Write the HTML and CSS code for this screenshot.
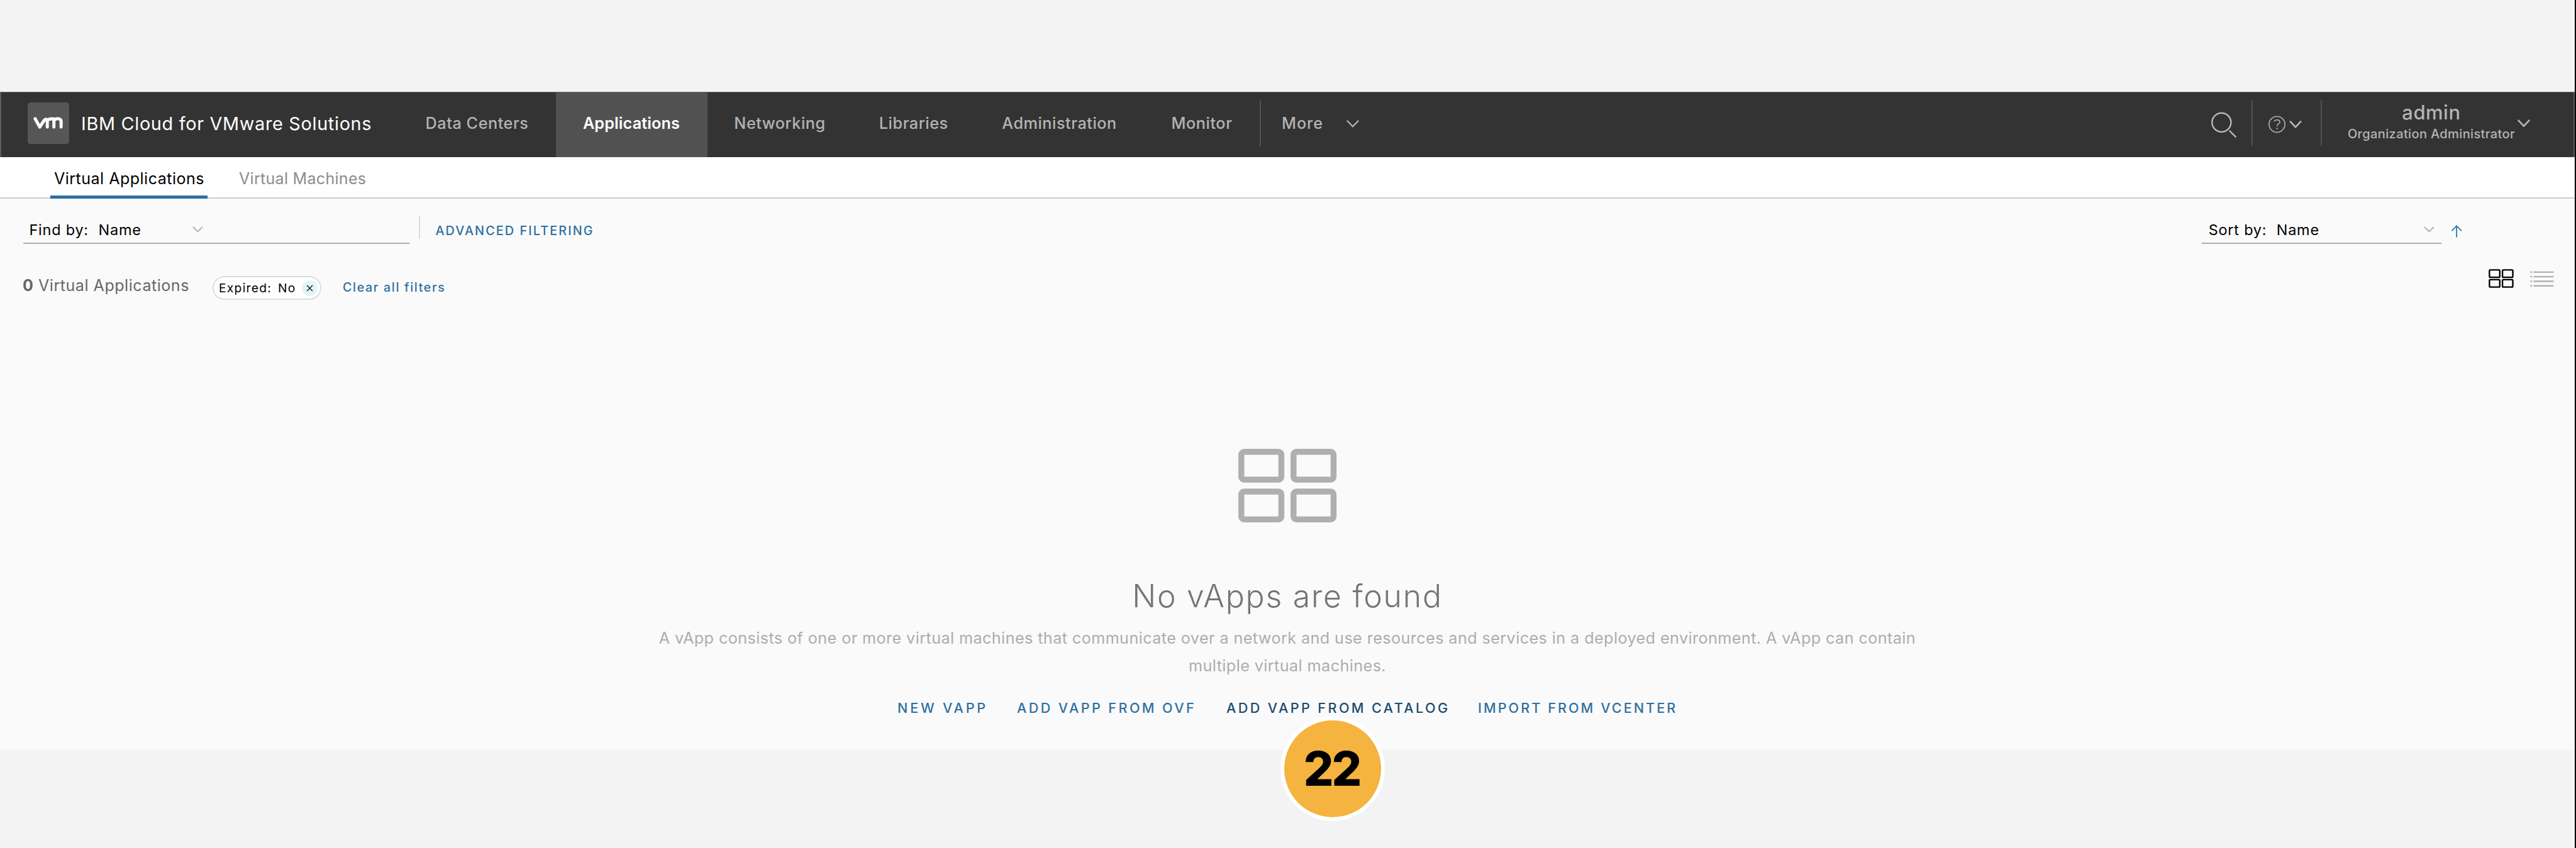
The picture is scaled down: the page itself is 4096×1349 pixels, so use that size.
FILE: index.html
```
<!DOCTYPE html>
<html lang="en">
<head>
<meta charset="utf-8">
<title>Virtual Applications</title>
<link rel="stylesheet" href="styles.css">
</head>
<body>
<div class="page">
  <header class="header">
    <svg class="logo" viewBox="0 0 72 72">
      <rect width="72" height="72" rx="5" fill="#565656"/>
      <path d="M13 28.300 L21 42.700 L29 30.500 Q31.500 28 34 30.500 V42.700 M34 31 Q37.500 27.500 45.500 28.500 V42.700 M45.500 31 C50 26.500 58 27.500 58 33 V42.700" fill="none" stroke="#fff" stroke-width="5.400" stroke-linecap="round" stroke-linejoin="round"/>
    </svg>
    <h1 class="brand">IBM Cloud for VMware Solutions</h1>
    <nav class="nav">
      <a>Data Centers</a>
      <a class="active">Applications</a>
      <a>Networking</a>
      <a>Libraries</a>
      <a>Administration</a>
      <a>Monitor</a>
    </nav>
    <div class="more">
      <span>More</span>
      <svg class="chevron-light" viewBox="0 0 24 15"><path d="M2 2 L12 12.500 L22 2"/></svg>
    </div>
    <div class="tools">
      <svg class="search" viewBox="0 0 46 46"><circle cx="19" cy="19.500" r="16.500"/><path d="M33.500 34.500 L43.500 44.500"/></svg>
      <i class="bar"></i>
      <svg class="help" viewBox="0 0 62 32">
        <circle cx="17" cy="16.200" r="13.800" stroke-width="1.800"/>
        <path d="M12.300 11.200 Q13.300 8.400 17 8.400 Q22 8.400 22 12.200 Q22 14.400 19.300 15.700 Q17.200 16.800 17.200 19.300" stroke-width="1.800"/>
        <circle cx="17.200" cy="23.300" r="1.300" class="dot"/>
        <path d="M39.500 10.500 L49.300 21 L59 10.500" stroke-width="3"/>
      </svg>
      <i class="bar"></i>
      <div class="user">
        <span class="user-name">admin</span>
        <span class="user-role">Organization Administrator</span>
      </div>
      <svg class="chevron-light user-chevron" viewBox="0 0 24 15"><path d="M2 2 L12 12.500 L22 2"/></svg>
    </div>
  </header>

  <nav class="tabs">
    <a class="tab current">Virtual Applications</a>
    <a class="tab">Virtual Machines</a>
  </nav>

  <main class="content">
    <section class="filters">
      <div class="select find">
        <span class="label">Find by:</span><span class="value">Name</span>
        <svg class="caret" viewBox="0 0 18 10"><path d="M1 1 L9 9 L17 1"/></svg>
      </div>
      <i class="rule"></i>
      <a class="advanced">ADVANCED FILTERING</a>
      <div class="select sort">
        <span class="label">Sort by:</span><span class="value">Name</span>
        <svg class="caret" viewBox="0 0 18 10"><path d="M1 1 L9 9 L17 1"/></svg>
      </div>
      <svg class="arrow" viewBox="0 0 20 22"><path d="M10 21.500 V1.500 M1.500 10.200 L10 1.500 L18.500 10.200"/></svg>
    </section>

    <section class="summary">
      <p class="count"><b>0</b> Virtual Applications</p>
      <div class="chip">
        <span class="chip-label">Expired:</span><span>No</span>
        <svg class="chip-close" viewBox="0 0 28 28"><circle cx="14" cy="14" r="14"/><path d="M9 9 L19 19 M19 9 L9 19"/></svg>
      </div>
      <a class="clear">Clear all filters</a>
      <div class="views">
        <svg class="view-grid" viewBox="0 0 44 33"><g fill="none" stroke="#000" stroke-width="2.600">
          <rect x="1.500" y="1.500" width="18" height="12.800" rx="1.500"/><rect x="24.200" y="1.500" width="18" height="12.800" rx="1.500"/>
          <rect x="1.500" y="18.500" width="18" height="12.800" rx="1.500"/><rect x="24.200" y="18.500" width="18" height="12.800" rx="1.500"/></g></svg>
        <svg class="view-list" viewBox="0 0 42 28">
          <g fill="#e0e0e0"><path d="M0 0h4v4H0z M0 8h4v4H0z M0 16h4v4H0z M0 24h4v4H0z"/></g>
          <g fill="#a6a6a6"><path d="M1 1h2v2H1z M1 9h2v2H1z M1 17h2v2H1z M1 25h2v2H1z"/></g>
          <path d="M7 2H40 M7 10H40 M7 18H40 M7 26H40" stroke="#b0b0b0" stroke-width="2.600" stroke-linecap="round"/>
        </svg>
      </div>
    </section>

    <section class="empty">
      <svg class="empty-icon" viewBox="0 0 171 128"><g fill="none" stroke="#afafaf" stroke-width="10.400">
        <rect x="5.200" y="5.200" width="69.600" height="48.400" rx="5"/><rect x="96" y="5.200" width="69.600" height="48.400" rx="5"/>
        <rect x="5.200" y="74.300" width="69.600" height="48.400" rx="5"/><rect x="96" y="74.300" width="69.600" height="48.400" rx="5"/></g></svg>
      <h2>No vApps are found</h2>
      <p>A vApp consists of one or more virtual machines that communicate over a network and use resources and services in a deployed environment. A vApp can contain multiple virtual machines.</p>
      <div class="actions">
        <a>NEW VAPP</a>
        <a>ADD VAPP FROM OVF</a>
        <a class="pressed">ADD VAPP FROM CATALOG</a>
        <a>IMPORT FROM VCENTER</a>
      </div>
    </section>
  </main>
  <div class="step">22</div>
</div>
</body>
</html>
```
FILE: styles.css
```
* { box-sizing: border-box; }

body {
  margin: 0;
  background: #f3f3f3;
  font-family: Inter, "Noto Sans", sans-serif;
  color: #000;
}

h1, h2, p { margin: 0; font-weight: 400; }
svg { display: block; flex: none; overflow: visible; }
a, span { white-space: nowrap; }

.page {
  position: relative;
  height: 1349px;
  padding-top: 146px;
  border-right: 2px solid #000;
  overflow: hidden;
}

/* Header */
.header {
  display: flex;
  align-items: center;
  height: 104px;
  padding-left: 42px;
  background: #333;
  border: 0 solid #5c5c5c;
  border-width: 1px 2px 0;
  border-top-color: #6b706c;
}

.logo { width: 66px; height: 66px; margin-bottom: 6px; }

.brand {
  width: 523.5px;
  padding: 0 0 5px 19px;
  font-size: 28.8px;
  letter-spacing: 0.7px;
  color: #fff;
  white-space: nowrap;
}

.nav {
  display: grid;
  grid-template-columns: 250px 241px 231px 194.500px 269px 184px;
  align-self: stretch;
  font-size: 25.2px;
  font-weight: 500;
  letter-spacing: 0.56px;
  color: #b3b3b3;
}

.nav a {
  display: flex;
  align-items: center;
  justify-content: center;
  padding-bottom: 5px;
}

.nav .active {
  background: #515151;
  color: #fff;
  font-weight: 600;
  letter-spacing: 0.15px;
}

.more {
  display: flex;
  align-items: center;
  height: 73px;
  margin-bottom: 5px;
  padding-left: 33px;
  border-left: 2px solid #515151;
  font-size: 25.2px;
  font-weight: 500;
  letter-spacing: 0.9px;
  color: #b3b3b3;
}

.chevron-light { width: 22px; height: 13.700px; fill: none; stroke: #b3b3b3; stroke-width: 3; }
.more .chevron-light { margin: 2px 0 0 36px; stroke-width: 2.500; }

.tools {
  display: flex;
  align-items: center;
  margin: 0 68px 6px auto;
}

.search { width: 42px; height: 42px; margin: 5px 23px 0 0; fill: none; stroke: #b9b9b9; stroke-width: 2.600; stroke-linecap: round; }
.bar { width: 2px; height: 73px; background: #515151; }
.help { width: 56.700px; height: 29.300px; margin: 4px 28px 0 23px; fill: none; stroke: #b3b3b3; }
.help .dot { fill: #b3b3b3; stroke: none; }

.user {
  display: flex;
  flex-direction: column;
  align-items: center;
  gap: 4px;
  margin: -3px 3px 0 41px;
  color: #b3b3b3;
  font-weight: 500;
}

.user-name { font-size: 31px; line-height: 34px; letter-spacing: 0.5px; }
.user-role { font-size: 20.1px; line-height: 26px; letter-spacing: 0.32px; }

/* Section tabs */
.tabs {
  display: flex;
  gap: 44px;
  height: 66px;
  padding-left: 80px;
  background: #fff;
  border-bottom: 2px solid #ccc;
}

.tab {
  height: 66px;
  padding: 0 6px;
  font-size: 25px;
  line-height: 68px;
  letter-spacing: 0.3px;
  color: #8c8c8c;
}

.current {
  width: 250px;
  letter-spacing: 0.5px;
  color: #000;
  border-bottom: 5px solid #2d70a1;
}

/* Content */
.content { height: 876.5px; padding-top: 28px; background: #fafafa; }

.filters { display: flex; align-items: flex-start; height: 94px; padding-left: 37px; }

.select {
  display: flex;
  align-items: center;
  height: 44px;
  border-bottom: 2px solid #aeaeae;
  font-size: 23.5px;
  letter-spacing: 0.75px;
}

.find { width: 614px; padding-left: 9.500px; }
.label { width: 110px; }
.sort .label { width: 108px; }
.sort { width: 381px; margin-left: auto; padding: 0 11px; }
.value { width: 149px; }
.sort .value { width: auto; }
.caret { width: 17px; height: 9.500px; fill: none; stroke: #b0b0b0; stroke-width: 2; }
.sort .caret { margin-left: auto; }

.rule { width: 1.500px; height: 36px; margin: 0 25px 0 15px; background: #ddd; }

.advanced {
  font-size: 19.8px;
  font-weight: 500;
  line-height: 46px;
  letter-spacing: 2.1px;
  color: #2d70a1;
}

.arrow { width: 18.300px; height: 20px; margin: 14px 179px 0 15px; fill: none; stroke: #2d78ad; stroke-width: 2; }

.summary { display: flex; align-items: center; height: 40px; padding-left: 36px; }

.count { width: 302px; padding-bottom: 8px; font-size: 25px; letter-spacing: 0.55px; color: #666; white-space: nowrap; }
.count b { font-weight: 700; }

.chip {
  display: flex;
  align-items: center;
  width: 173px;
  height: 38px;
  padding: 0 4px 0 8px;
  background: #fff;
  border: 2px solid #ddd;
  border-radius: 19px;
  font-size: 19.2px;
  letter-spacing: 1.3px;
}

.chip-label { width: 94px; }
.chip-close { width: 25px; height: 25px; margin-left: auto; }
.chip-close circle { fill: #e1f4fa; }
.chip-close path { stroke: #222; stroke-width: 1.700; }

.clear {
  padding: 0 0 2px 34px;
  font-size: 19.5px;
  font-weight: 500;
  letter-spacing: 1.72px;
  color: #2d70a1;
}

.views { display: flex; align-items: center; gap: 25px; margin: 0 33px 29px auto; }
.view-grid { width: 40.200px; height: 30.200px; }
.view-list { width: 38.400px; height: 25.600px; }

.empty {
  display: flex;
  flex-direction: column;
  align-items: center;
  padding-top: 236px;
}

.empty-icon { width: 156.400px; height: 117px; }

.empty h2 {
  margin-top: 87px;
  font-size: 50px;
  font-weight: 300;
  line-height: 60px;
  letter-spacing: 1.75px;
  color: #757575;
}

.empty p {
  width: 2040px;
  margin-top: 15px;
  font-size: 25.2px;
  line-height: 44px;
  letter-spacing: 0.41px;
  text-align: center;
  color: #adadad;
}

.actions {
  display: grid;
  grid-template-columns: 190px 333px 400px 314px;
  margin: 30px 3px 0 0;
  font-size: 21.6px;
  font-weight: 500;
  line-height: 30px;
  letter-spacing: 3.4px;
  color: #2d70a1;
}

.actions a:first-child { letter-spacing: 3.8px; }
.actions a:last-child { letter-spacing: 3.05px; }
.actions .pressed { color: #1b4b70; }

/* Step marker laid over the page */
.step {
  position: absolute;
  left: 2036px;
  top: 1140px;
  width: 166px;
  height: 166px;
  padding-right: 3px;
  border: 6.5px solid #fff;
  border-radius: 50%;
  background: #f5b33f;
  font-size: 75px;
  font-weight: 800;
  line-height: 153px;
  letter-spacing: -3px;
  text-align: center;
}
```
